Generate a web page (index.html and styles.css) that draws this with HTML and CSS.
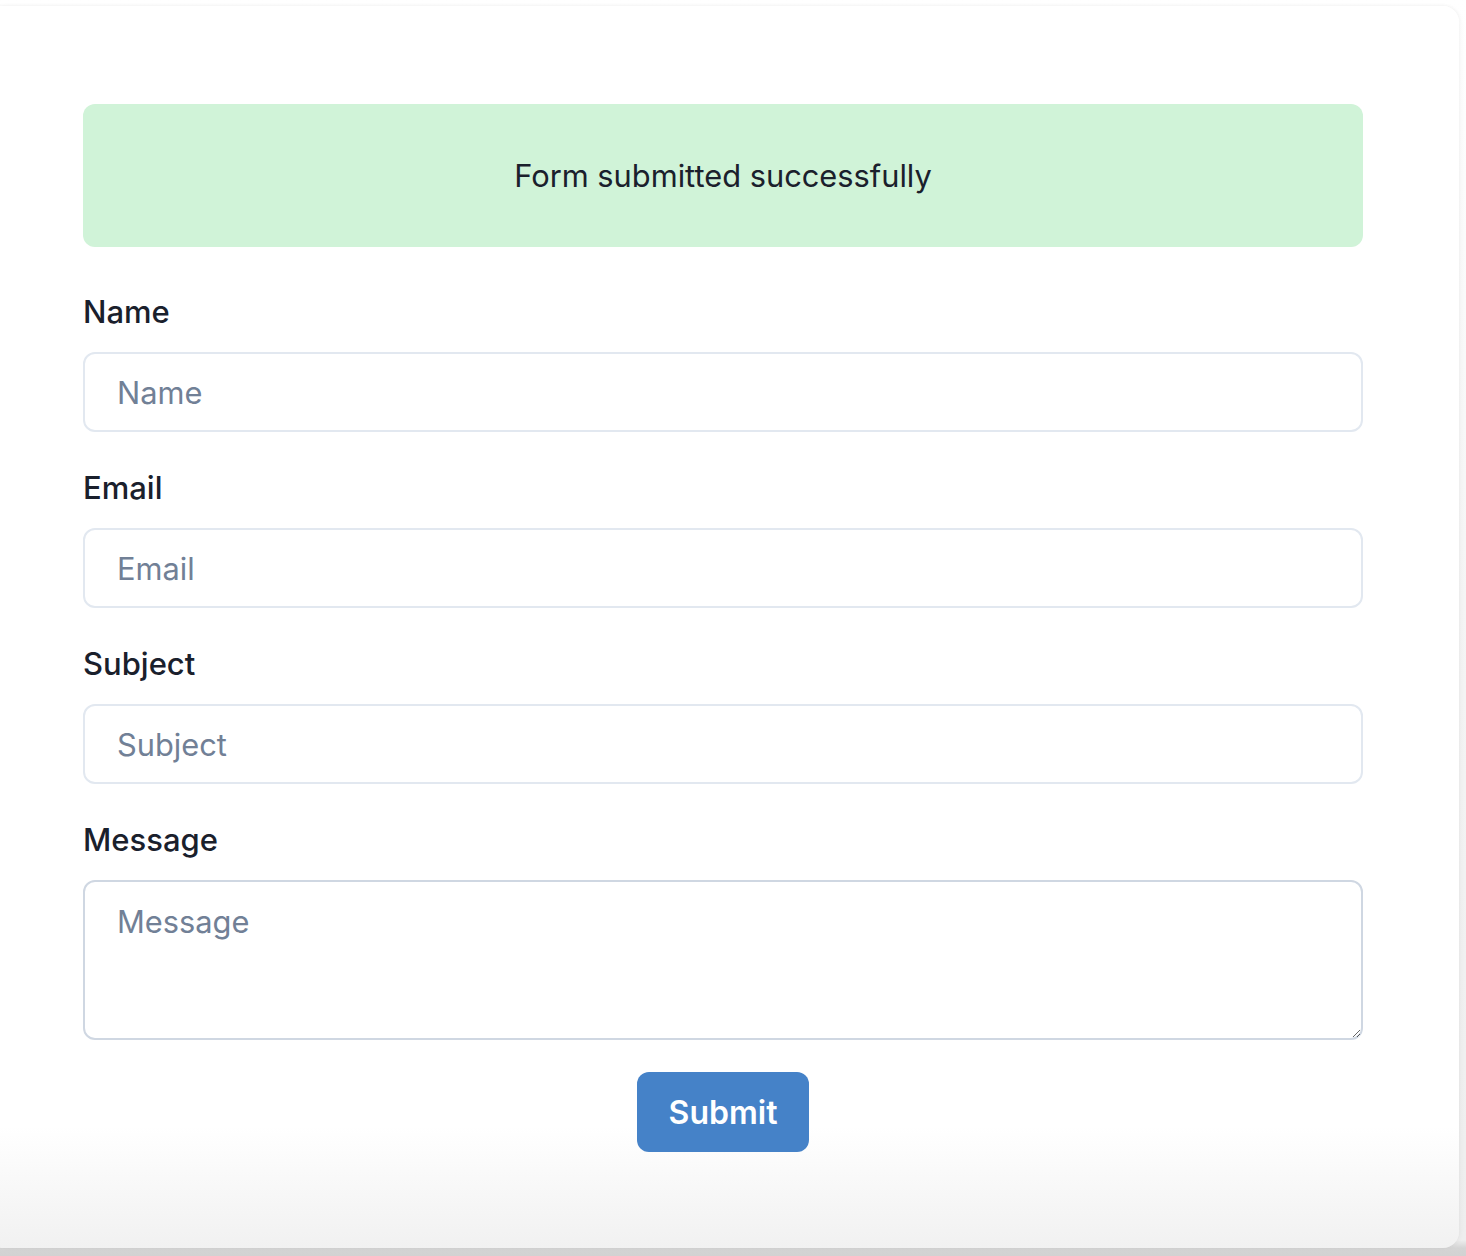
FILE: index.html
```html
<!DOCTYPE html>
<html lang="en">
<head>
<meta charset="utf-8">
<title>Contact form</title>
<link rel="stylesheet" href="styles.css">
</head>
<body>
<div class="card">
  <div class="alert">Form submitted successfully</div>
  <form class="form">
    <div class="field">
      <label class="label" for="name">Name</label>
      <input class="input" id="name" type="text" placeholder="Name">
    </div>
    <div class="field">
      <label class="label" for="email">Email</label>
      <input class="input" id="email" type="email" placeholder="Email">
    </div>
    <div class="field">
      <label class="label" for="subject">Subject</label>
      <input class="input" id="subject" type="text" placeholder="Subject">
    </div>
    <div class="field">
      <label class="label" for="message">Message</label>
      <textarea class="textarea" id="message" placeholder="Message"></textarea>
    </div>
    <div class="actions">
      <button class="button" type="button">Submit</button>
    </div>
  </form>
</div>
</body>
</html>
```
FILE: styles.css
```css
html, body {
  margin: 0;
  padding: 0;
}
body {
  background: linear-gradient(to bottom, #ffffff 0, #f5f5f5 600px, #eeeeee 1240px, #d4d4d4 1248px, #d2d2d2 1256px);
  font-family: Inter, "Noto Sans", "Liberation Sans", sans-serif;
  color: #1a202c;
  overflow: hidden;
  height: 1256px;
}
.card {
  box-sizing: border-box;
  width: 1472px;
  margin: 6px 0 0 -13px;
  padding: 98px 96px 96px;
  background: linear-gradient(to bottom, #ffffff 0, #ffffff 1120px, #f1f1f1 1242px);
  border-radius: 16px;
  box-shadow: 0 -1px 3px rgba(0,0,0,0.03), 2px 0 4px rgba(0,0,0,0.03);
}
.alert {
  box-sizing: border-box;
  height: 143px;
  display: flex;
  align-items: center;
  justify-content: center;
  background: #d0f3d8;
  border-radius: 12px;
  font-size: 30.8px;
  color: #1a202c;
  margin-bottom: 41px;
}
.form {
  display: flex;
  flex-direction: column;
  gap: 32px;
}
.field {
  display: flex;
  flex-direction: column;
}
.label {
  font-size: 31px;
  font-weight: 500;
  line-height: 48px;
  margin-bottom: 16px;
  color: #1a202c;
}
.input, .textarea {
  box-sizing: border-box;
  width: 100%;
  margin: 0;
  font-family: inherit;
  font-size: 30.8px;
  color: #1a202c;
  background: #fff;
  border: 2px solid #e2e8f0;
  border-radius: 12px;
  outline: none;
  padding: 0 32px;
}
.input {
  height: 80px;
}
.textarea {
  height: 160px;
  padding: 16px 32px;
  line-height: 48px;
  border-color: #cfd7e2;
  resize: vertical;
  display: block;
}
.input::placeholder, .textarea::placeholder {
  color: #718096;
  opacity: 1;
}
.actions {
  display: flex;
  justify-content: center;
}
.button {
  height: 80px;
  padding: 0 32px;
  border: none;
  border-radius: 12px;
  background: #4582c8;
  color: #fff;
  font-family: inherit;
  font-size: 32px;
  font-weight: 600;
  cursor: pointer;
}
```
